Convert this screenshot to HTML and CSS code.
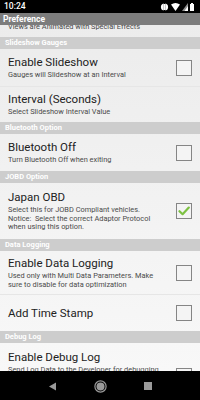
FILE: index.html
```html
<!DOCTYPE html>
<html>
<head>
<meta charset="utf-8">
<link rel="stylesheet" href="styles.css">
</head>
<body>
<div class="screen">
  <div class="status">
    <span class="clock">10:24</span>
    <div class="sicons">
      <svg width="9" height="8" viewBox="0 0 9 8"><circle cx="4.5" cy="4" r="3.6" fill="#fff"/><rect x="3.8" y="0" width="1.4" height="8" fill="#000"/><rect x="4" y="1" width="1" height="6" fill="#fff"/></svg>
      <svg width="9" height="8" viewBox="0 0 9 8"><path d="M0 1.5 Q4.5 -1.5 9 1.5 L4.5 8 Z" fill="#fff"/></svg>
      <svg width="6" height="8" viewBox="0 0 6 8"><path d="M6 0 L6 8 L0 8 Z" fill="#fff" opacity="0.55"/><path d="M6 3 L6 8 L2.5 8 Z" fill="#fff"/></svg>
      <svg width="4" height="8" viewBox="0 0 4 8"><rect x="1" y="0" width="2" height="1" fill="#fff"/><rect x="0" y="1" width="4" height="7" fill="#fff"/></svg>
    </div>
  </div>
  <div class="titlebar">Preference</div>
  <div class="list">
    <div class="fragment"><div class="summary">Views are Animated with Special Effects</div></div>
    <div class="header">Slideshow Gauges</div>
    <div class="row r1">
      <div class="texts"><div class="title">Enable Slideshow</div><div class="summary">Gauges will Slideshow at an Interval</div></div>
      <span class="box"></span>
    </div>
    <div class="row r2">
      <div class="texts"><div class="title">Interval (Seconds)</div><div class="summary">Select Slideshow Interval Value</div></div>
    </div>
    <div class="header">Bluetooth Option</div>
    <div class="row r3">
      <div class="texts"><div class="title">Bluetooth Off</div><div class="summary">Turn Bluetooth Off when exiting</div></div>
      <span class="box"></span>
    </div>
    <div class="header">JOBD Option</div>
    <div class="row r4">
      <div class="texts"><div class="title">Japan OBD</div><div class="summary">Select this for JOBD Compliant vehicles.<br>Notice:&nbsp; Select the correct Adaptor Protocol<br>when using this option.</div></div>
      <span class="box checked"><svg width="12" height="10" viewBox="0 0 12 10"><path d="M1.5 5.2 L4.6 8.2 L10.8 1.6" fill="none" stroke="#7cc142" stroke-width="2.2" stroke-linecap="round" stroke-linejoin="round"/></svg></span>
    </div>
    <div class="header">Data Logging</div>
    <div class="row r5">
      <div class="texts"><div class="title">Enable Data Logging</div><div class="summary">Used only with Multi Data Parameters. Make<br>sure to disable for data optimization</div></div>
      <span class="box"></span>
    </div>
    <div class="row r6">
      <div class="texts"><div class="title">Add Time Stamp</div></div>
      <span class="box"></span>
    </div>
    <div class="header">Debug Log</div>
    <div class="row r7">
      <div class="texts"><div class="title">Enable Debug Log</div><div class="summary">Send Log Data to the Developer for debugging</div></div>
      <span class="box"></span>
    </div>
  </div>
  <div class="navbar">
    <svg width="9" height="9" viewBox="0 0 9 9"><path d="M8 0.5 L8 8.5 L1 4.5 Z" fill="#9a9a9a"/></svg>
    <svg width="13" height="13" viewBox="0 0 13 13"><circle cx="6.5" cy="6.5" r="5.6" fill="none" stroke="#9a9a9a" stroke-width="1.2"/><circle cx="6.5" cy="6.5" r="4" fill="#9a9a9a"/></svg>
    <svg width="8" height="8" viewBox="0 0 8 8"><rect x="0" y="0" width="8" height="8" fill="#9a9a9a"/></svg>
  </div>
</div>
</body>
</html>
```
FILE: styles.css
```css
html, body {
  margin: 0;
  padding: 0;
  background: #000;
}
.screen {
  width: 200px;
  height: 400px;
  display: flex;
  flex-direction: column;
  font-family: Roboto, "Noto Sans", sans-serif;
  overflow: hidden;
}
.status {
  height: 13px;
  background: #000;
  color: #fff;
  display: flex;
  align-items: center;
  justify-content: space-between;
  padding: 0 6px 0 4px;
  box-sizing: border-box;
}
.clock {
  font-size: 8.5px;
  font-weight: 500;
  line-height: 13px;
}
.sicons {
  display: flex;
  align-items: center;
  gap: 2px;
}
.titlebar {
  height: 12px;
  background: #7c7c7c;
  color: #fff;
  font-weight: bold;
  font-size: 8.5px;
  line-height: 12px;
  padding-left: 3px;
}
.list {
  flex: 1;
  overflow: hidden;
  background: linear-gradient(#ececec, #f8f8f8);
  display: flex;
  flex-direction: column;
}
.fragment {
  height: 12px;
  flex: none;
  overflow: hidden;
  padding-left: 8px;
}
.fragment .summary {
  margin-top: -2px;
}
.header {
  height: 12px;
  flex: none;
  background: #cdcdcd;
  color: #fff;
  font-weight: bold;
  font-size: 7.5px;
  line-height: 12px;
  padding-left: 5px;
}
.row {
  flex: none;
  display: flex;
  align-items: center;
  justify-content: space-between;
  padding: 0 8px;
  box-sizing: border-box;
  border-bottom: 1px solid #e6e6e6;
}
.r1 { height: 38px; }
.r2 { height: 35px; border-bottom: none; }
.r3 { height: 37px; border-bottom: none; }
.r4 { height: 56px; border-bottom: none; }
.r5 { height: 44px; }
.r6 { height: 36px; border-bottom: none; }
.r7 { height: 40px; align-items: flex-start; padding-top: 7px; }
.title {
  font-size: 11.5px;
  line-height: 15px;
  color: #222;
}
.summary {
  font-size: 7.4px;
  line-height: 8.6px;
  color: #4a4a4a;
  margin-top: 1px;
  white-space: nowrap;
}
.box {
  width: 16px;
  height: 16px;
  box-sizing: border-box;
  border: 1px solid #858585;
  background: #f4f4f4;
  flex: none;
  display: flex;
  align-items: center;
  justify-content: center;
}
.r7 .box { margin-top: 18px; }
.navbar {
  height: 29px;
  flex: none;
  background: #000;
  display: flex;
  align-items: center;
  justify-content: center;
  gap: 37px;
  padding-top: 1px;
  box-sizing: border-box;
}
```
